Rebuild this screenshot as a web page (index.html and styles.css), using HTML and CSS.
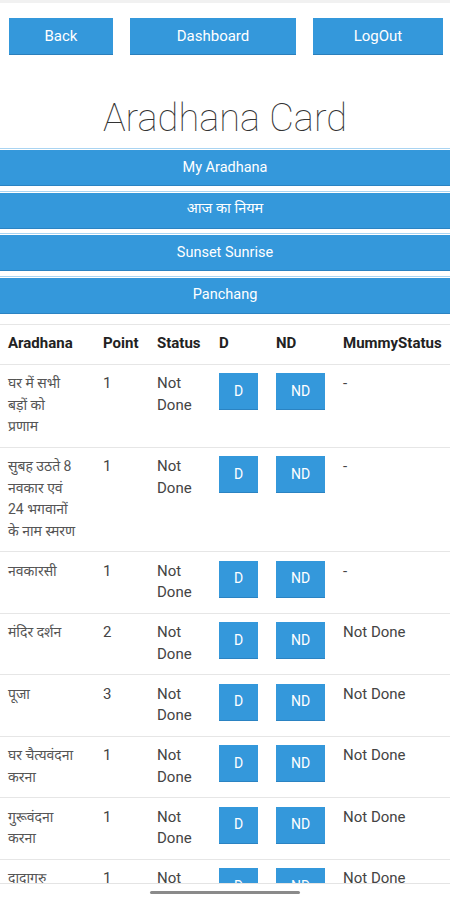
FILE: index.html
```html
<!DOCTYPE html>
<html lang="hi">
<head>
<meta charset="utf-8">
<title>Aradhana Card</title>
<link rel="stylesheet" href="styles.css">
</head>
<body>
<div class="phone">
  <div class="screen">
    <div class="topbar">
      <a class="top-btn back">Back</a>
      <a class="top-btn dash">Dashboard</a>
      <a class="top-btn logout">LogOut</a>
    </div>
    <h1 class="title">Aradhana Card</h1>
    <nav class="menu">
      <a class="menu-btn">My Aradhana</a>
      <a class="menu-btn">आज का नियम</a>
      <a class="menu-btn">Sunset Sunrise</a>
      <a class="menu-btn">Panchang</a>
    </nav>
    <table class="grid">
      <colgroup>
        <col class="c1"><col class="c2"><col class="c3"><col class="c4"><col class="c5"><col class="c6">
      </colgroup>
      <thead>
        <tr><th>Aradhana</th><th>Point</th><th>Status</th><th>D</th><th>ND</th><th>MummyStatus</th></tr>
      </thead>
      <tbody>
        <tr><td class="hi">घर में सभी<br>बड़ों को<br>प्रणाम</td><td>1</td><td>Not Done</td><td><a class="sm-btn">D</a></td><td><a class="sm-btn">ND</a></td><td>-</td></tr>
        <tr><td class="hi">सुबह उठते 8<br>नवकार एवं<br>24 भगवानों<br>के नाम स्मरण</td><td>1</td><td>Not Done</td><td><a class="sm-btn">D</a></td><td><a class="sm-btn">ND</a></td><td>-</td></tr>
        <tr><td class="hi">नवकारसी</td><td>1</td><td>Not Done</td><td><a class="sm-btn">D</a></td><td><a class="sm-btn">ND</a></td><td>-</td></tr>
        <tr><td class="hi">मंदिर दर्शन</td><td>2</td><td>Not Done</td><td><a class="sm-btn">D</a></td><td><a class="sm-btn">ND</a></td><td class="ms">Not Done</td></tr>
        <tr><td class="hi">पूजा</td><td>3</td><td>Not Done</td><td><a class="sm-btn">D</a></td><td><a class="sm-btn">ND</a></td><td class="ms">Not Done</td></tr>
        <tr><td class="hi">घर चैत्यवंदना<br>करना</td><td>1</td><td>Not Done</td><td><a class="sm-btn">D</a></td><td><a class="sm-btn">ND</a></td><td class="ms">Not Done</td></tr>
        <tr><td class="hi">गुरूवंदना<br>करना</td><td>1</td><td>Not Done</td><td><a class="sm-btn">D</a></td><td><a class="sm-btn">ND</a></td><td class="ms">Not Done</td></tr>
        <tr><td class="hi">दादागुरु<br>इकतीसा</td><td>1</td><td>Not Done</td><td><a class="sm-btn">D</a></td><td><a class="sm-btn">ND</a></td><td class="ms">Not Done</td></tr>
      </tbody>
    </table>
  </div>
  <div class="sysbar"><span class="pill"></span></div>
</div>
</body>
</html>
```

FILE: styles.css
```css
* { box-sizing: border-box; }
html, body { margin: 0; padding: 0; background: #fff; }
body {
  font-family: Roboto, "Noto Sans Devanagari", "Lohit Devanagari", "Noto Sans", sans-serif;
  color: #333;
}
.phone {
  width: 450px;
  height: 900px;
  display: flex;
  flex-direction: column;
  overflow: hidden;
}
.screen {
  flex: 1;
  overflow: hidden;
  border-top: 3px solid #f1f1f1;
}
.topbar {
  display: flex;
  gap: 17px;
  padding: 15px 7px 0 9px;
}
.top-btn {
  display: flex;
  align-items: center;
  justify-content: center;
  height: 37px;
  background: #3498db;
  border-bottom: 1px solid #2b7fbb;
  color: #fff;
  font-size: 15px;
}
.back { width: 104px; }
.dash { width: 166px; }
.logout { width: 130px; }
.title {
  margin: 42px 0 0;
  text-align: center;
  font-size: 38px;
  font-weight: 100;
  line-height: 42px;
  color: #333;
}
.menu {
  margin-top: 9px;
  display: flex;
  flex-direction: column;
  gap: 4.5px;
}
.menu-btn {
  display: flex;
  align-items: center;
  justify-content: center;
  height: 38px;
  background: #3498db;
  border-top: 1px solid #a9d4f2;
  border-bottom: 1px solid #2b83c2;
  box-shadow: inset 0 1px 0 #fff;
  color: #fff;
  font-size: 14.5px;
}
.grid {
  margin-top: 10px;
  width: 450px;
  table-layout: fixed;
  border-collapse: collapse;
  font-size: 15px;
  line-height: 21.5px;
}
.c1 { width: 95px; }
.c2 { width: 54px; }
.c3 { width: 62px; }
.c4 { width: 57px; }
.c5 { width: 67px; }
.c6 { width: 115px; }
.grid th, .grid td {
  padding: 8.75px 8px;
  text-align: left;
  vertical-align: top;
  border-top: 1px solid #e6e6e6;
}
.grid th {
  font-weight: 700;
  white-space: nowrap;
  color: #222;
}
.grid td { color: #444; }
.grid td.hi { white-space: nowrap; font-size: 14px; color: #555; }
.grid td.ms { white-space: nowrap; }
.sm-btn {
  display: inline-flex;
  align-items: center;
  justify-content: center;
  height: 37px;
  padding: 0 15px;
  background: #3498db;
  border-bottom: 1px solid #2b83c2;
  color: #fff;
  font-size: 14px;
}
.sysbar {
  height: 17px;
  flex: none;
  border-top: 1px solid #e4e4e4;
  display: flex;
  justify-content: center;
  padding-top: 7px;
  background: #fff;
}
.pill {
  width: 150px;
  height: 3px;
  border-radius: 2px;
  background: #8a8a8a;
}
```
